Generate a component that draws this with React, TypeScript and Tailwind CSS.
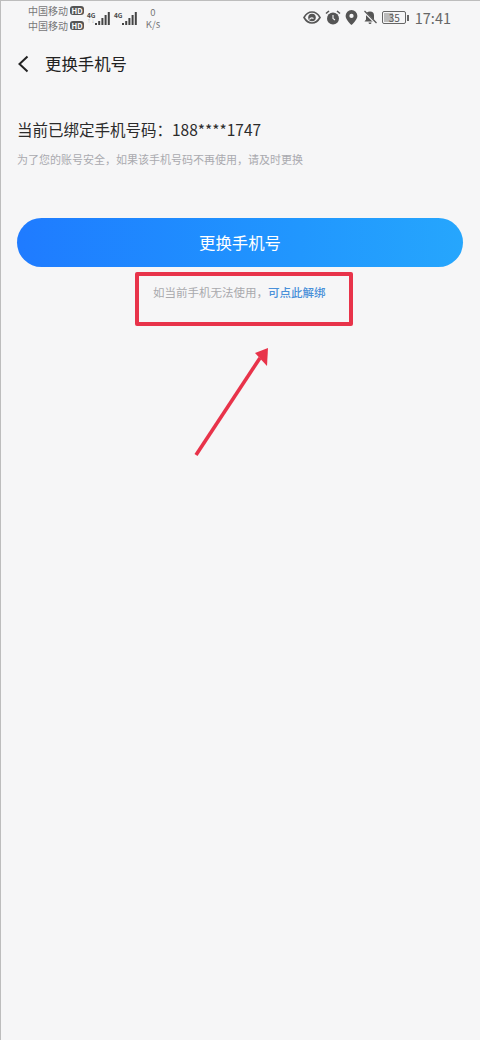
import React from 'react';

const font = { fontFamily: '"Noto Sans CJK SC", "Noto Sans", sans-serif' };

const Signal = ({ bars }: { bars: number[] }) => (
  <svg width="16" height="14" viewBox="0 0 16 14" fill="#444">
    {bars.map((h, i) => (
      <rect key={i} x={i * 3.2} y={14 - h} width="2" height={h} />
    ))}
  </svg>
);

const StatusBar = () => (
  <div className="flex h-[36px] items-start text-[#777]">
    <div className="ml-[27px] mt-[2px] flex flex-col text-[10px] leading-[15px]">
      {[0, 1].map(i => (
        <div key={i} className="flex items-center gap-[2px]">
          <span>中国移动</span>
          <span className="w-[14px] rounded-[3px] bg-[#555] text-center text-[7.5px] font-bold leading-[9px] text-white">HD</span>
        </div>
      ))}
    </div>
    <div className="ml-[3px] mt-[10px] flex items-start">
      <div className="flex w-[8px] flex-col text-[6.5px] font-bold leading-[8px] text-[#444]">
        <span>4G</span>
        <span className="text-[4px] font-normal leading-[5px] text-[#aaa]">↑↓</span>
      </div>
      <Signal bars={[2, 4, 7, 10, 13]} />
      <span className="ml-[3px] w-[8px] text-[6.5px] font-bold leading-[8px] text-[#444]">4G</span>
      <Signal bars={[2, 4, 7, 10, 13]} />
    </div>
    <div className="ml-[7px] mt-[5px] flex w-[16px] flex-col items-center text-[9.5px] leading-[12px]">
      <span>0</span>
      <span>K/s</span>
    </div>
    <div className="ml-auto mr-[29px] mt-[9px] flex items-center text-[#555]">
      <svg width="18" height="13" viewBox="0 0 18 13" className="mr-[4px]">
        <path d="M1 6.5C3 3 6 1 9 1s6 2 8 5.5c-2 3.5-5 5.5-8 5.5S3 10 1 6.5z" fill="none" stroke="#555" strokeWidth="1.6" />
        <circle cx="9" cy="6.5" r="3.8" fill="#555" />
        <path d="M6.5 8.5a3 3 0 0 1 4-1" stroke="#f6f6f7" strokeWidth="1.2" fill="none" />
      </svg>
      <svg width="16" height="15" viewBox="0 0 16 15" className="mr-[4px]">
        <circle cx="8" cy="8.5" r="6" fill="#555" />
        <path d="M1 3.5 4 1M15 3.5 12 1" stroke="#555" strokeWidth="1.6" fill="none" />
        <path d="M8 5v3.5l2 1.5" stroke="#f6f6f7" strokeWidth="1.1" fill="none" />
      </svg>
      <svg width="13" height="15" viewBox="0 0 12 14" className="mr-[5px]">
        <path fillRule="evenodd" d="M6 0a5.5 5.5 0 0 1 5.5 5.5C11.5 9 6 14 6 14S.5 9 .5 5.5A5.5 5.5 0 0 1 6 0zm0 3.5a2 2 0 1 0 0 4 2 2 0 0 0 0-4z" fill="#555" />
      </svg>
      <svg width="14" height="15" viewBox="0 0 14 14" className="mr-[5px]">
        <path d="M7 1a4 4 0 0 1 4 4v4l1.5 2h-11L3 9V5a4 4 0 0 1 4-4zM5.5 12h3a1.5 1.5 0 0 1-3 0z" fill="#555" />
        <path d="M1 1l12 12" stroke="#f6f6f7" strokeWidth="2.4" />
        <path d="M1.5 .5l12 12" stroke="#555" strokeWidth="1.2" />
      </svg>
      <div className="relative h-[13px] w-[24px] overflow-hidden rounded-[2px] border border-[#666] text-center text-[10px] leading-[11px]">
        <div className="absolute inset-y-[1px] left-[1px] w-[9px] bg-[#bbb]" />
        <span className="relative">35</span>
      </div>
      <div className="ml-[1px] mr-[6px] h-[6px] w-[1.5px] bg-[#666]" />
      <span className="text-[14.5px] leading-[15px] text-[#666]">17:41</span>
    </div>
  </div>
);

export default function App() {
  return (
    <div className="relative h-[1040px] w-[480px] overflow-hidden border-l border-t border-[#bdbdbd] bg-[#f6f6f7]" style={font}>
      <StatusBar />

      <div className="flex h-[53px] items-center pl-[16px]">
        <svg width="12" height="18" viewBox="0 0 12 18" fill="none">
          <path d="M10.5 1.5 2.5 9l8 7.5" stroke="#222" strokeWidth="2" />
        </svg>
        <h1 className="ml-[16px] text-[16.4px] font-normal text-[#222]">更换手机号</h1>
      </div>

      <div className="mt-[27px] pl-[16px]">
        <p className="text-[15.5px] leading-[24px] text-[#2b2b2b]">当前已绑定手机号码：188****1747</p>
        <p className="mt-[10px] text-[11px] leading-[16px] text-[#aaaaaf]">为了您的账号安全，如果该手机号码不再使用，请及时更换</p>
      </div>

      <button className="ml-[16px] mt-[51px] flex h-[49px] w-[446px] items-center justify-center rounded-full bg-gradient-to-r from-[#1f7bff] to-[#26a6fd] text-[16.4px] text-white">
        更换手机号
      </button>

      <p className="mt-[17px] pl-[152px] text-[11.5px] leading-[16px] text-[#a9a9ad]">
        如当前手机无法使用，<span className="font-medium text-[#4a90d9]">可点此解绑</span>
      </p>

      <div className="absolute left-[134px] top-[271px] h-[54px] w-[218px] rounded-[2px] border-[4px] border-[#e8334a]" />

      <svg className="absolute left-[186px] top-[339px]" width="90" height="122" viewBox="0 0 90 122" fill="none">
        <path d="M9 115 L73 18" stroke="#e8334a" strokeWidth="3.6" />
        <path d="M81 8 L80 26 L68 13 Z" fill="#e8334a" />
      </svg>
    </div>
  );
}
